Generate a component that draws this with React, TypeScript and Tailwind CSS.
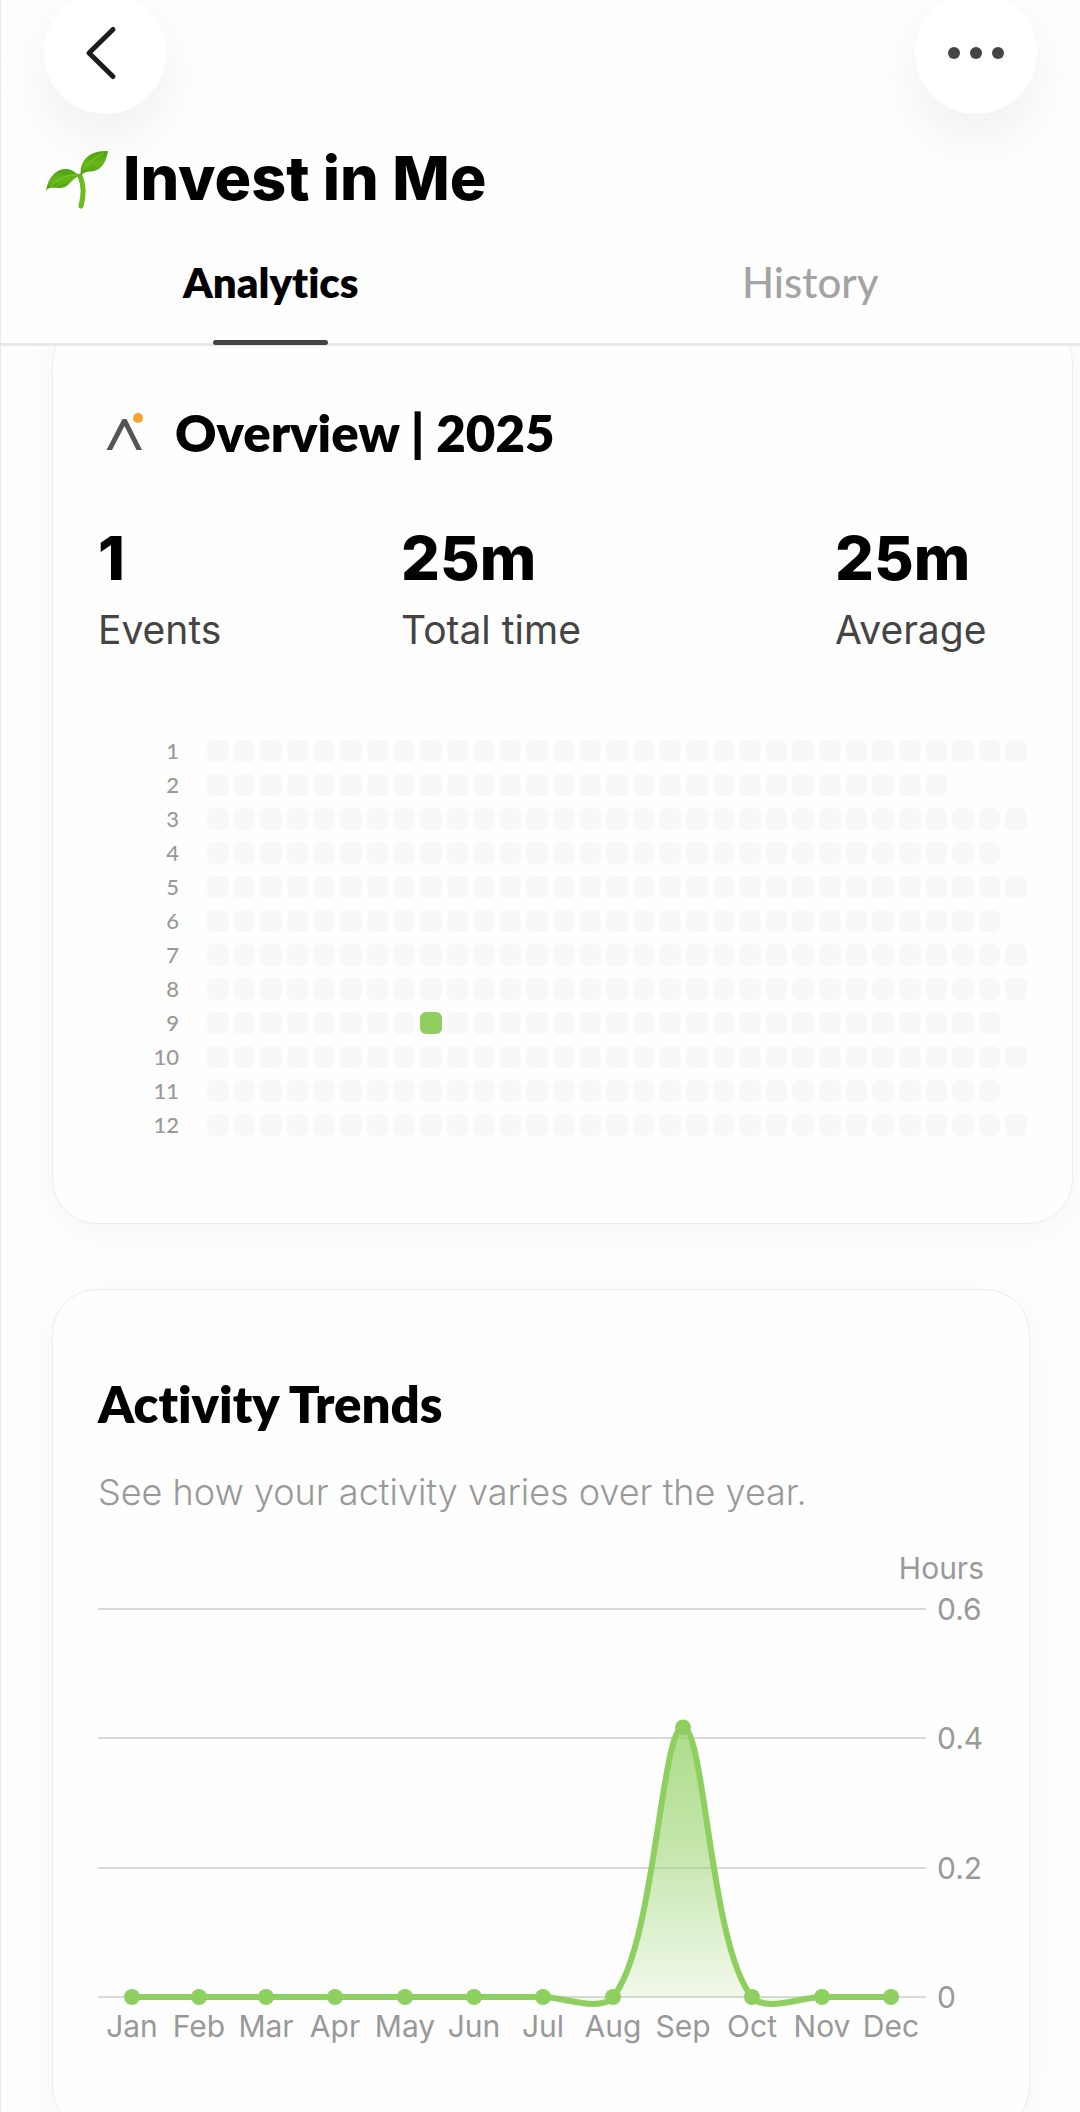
import { useState } from "react"

const daysInMonth = [31, 28, 31, 30, 31, 30, 31, 31, 30, 31, 30, 31];

const stats = [
    { value: "1", label: "Events" },
    { value: "25m", label: "Total time" },
    { value: "25m", label: "Average" },
];

// slope is the tangent of the curve in the point, before/after are the handle lengths along x
const months = [
    { name: "Jan", x: 34, hours: 0, slope: 0, before: 20, after: 20 },
    { name: "Feb", x: 101, hours: 0, slope: 0, before: 20, after: 20 },
    { name: "Mar", x: 168, hours: 0, slope: 0, before: 20, after: 20 },
    { name: "Apr", x: 237, hours: 0, slope: 0, before: 20, after: 20 },
    { name: "May", x: 307, hours: 0, slope: 0, before: 20, after: 20 },
    { name: "Jun", x: 376, hours: 0, slope: 0, before: 20, after: 20 },
    { name: "Jul", x: 445, hours: 0, slope: 0, before: 20, after: 20 },
    { name: "Aug", x: 515, hours: 0, slope: -1.2, before: 13, after: 42 },
    { name: "Sep", x: 585, hours: 0.4167, slope: 0, before: 22, after: 22 },
    { name: "Oct", x: 654, hours: 0, slope: 1.2, before: 42, after: 13 },
    { name: "Nov", x: 724, hours: 0, slope: 0, before: 20, after: 20 },
    { name: "Dec", x: 793, hours: 0, slope: 0, before: 20, after: 20 },
];

const BASE_Y = 457;
const PX_PER_HOUR = 647;

const points = months.map((m) => ({ ...m, y: BASE_Y - m.hours * PX_PER_HOUR }));

const getCurve = (pts: any[]) => {
    let d = `M${pts[0].x} ${pts[0].y}`;
    for (let i = 1; i < pts.length; i++) {
        const a = pts[i - 1];
        const b = pts[i];
        d += ` C${a.x + a.after} ${a.y + a.slope * a.after} ${b.x - b.before} ${b.y - b.slope * b.before} ${b.x} ${b.y}`;
    }
    return d;
}

const SproutIcon = () => (
    <svg width="64" height="64" viewBox="0 0 64 64" aria-hidden="true">
        <defs>
            <linearGradient id="leaf" x1="0" y1="0" x2="0" y2="1">
                <stop offset="0" stopColor="#4f9f12" />
                <stop offset="0.5" stopColor="#66b81a" />
                <stop offset="1" stopColor="#4c9d10" />
            </linearGradient>
        </defs>
        <path d="M35 30 C39 39 39 49 36 60" fill="none" stroke="#6cbb1c" strokeWidth="5" strokeLinecap="round" />
        <path d="M1 45 C3 30 12 23 21 23 C28 23 31 28 36 30 C29 30 27 37 20 41 C12 44 5 39 1 45Z" fill="url(#leaf)" />
        <path d="M36 30 C34 17 42 4 63 5 C61 16 57 23 49 25 C43 26 39 25 36 30Z" fill="url(#leaf)" />
        <path d="M6 40 C13 33 20 29 32 29 M39 23 C44 17 49 12 58 7" fill="none" stroke="#7cc92e" strokeWidth="1" strokeLinecap="round" />
    </svg>
)

const Heatmap = () => {
    return (
        <div className="mt-[86px] flex flex-col gap-3">
            {daysInMonth.map((days, month) => (
                <div key={month} className="flex items-center">
                    <span className="w-[81px] mr-7 text-right font-[Lato,sans-serif] text-[22px] leading-[22px] font-medium text-[#999999]">
                        {month + 1}
                    </span>
                    <div className="grid flex-1 grid-cols-31 gap-[5px]">
                        {Array.from({ length: days }, (_, day) => (
                            <div
                                key={day}
                                className={
                                    month === 8 && day === 8
                                        ? "h-[22px] rounded-md bg-[#8fcf60]"
                                        : "h-[22px] rounded-md bg-[#f8f8f8]"
                                }
                            />
                        ))}
                    </div>
                </div>
            ))}
        </div>
    )
}

const TrendsChart = () => {
    const curve = getCurve(points);

    return (
        <svg viewBox="0 0 886 510" className="mt-6 w-full h-auto font-[Inter,sans-serif] text-[30px]" role="img" aria-label="Hours per month">
            <defs>
                <linearGradient id="area" gradientUnits="userSpaceOnUse" x1="0" y1="187" x2="0" y2={BASE_Y}>
                    <stop offset="0" stopColor="#8fcf60" stopOpacity="0.72" />
                    <stop offset="0.4" stopColor="#8fcf60" stopOpacity="0.55" />
                    <stop offset="1" stopColor="#8fcf60" stopOpacity="0.12" />
                </linearGradient>
            </defs>
            <text x="886" y="39" textAnchor="end" fill="#999999">Hours</text>
            {["0.6", "0.4", "0.2", "0"].map((label) => {
                const y = Math.round(BASE_Y - Number(label) * PX_PER_HOUR);
                return (
                    <g key={label}>
                        <line x1="0" x2="828" y1={y} y2={y} stroke="#d9d9d9" strokeWidth="2" />
                        <text x="839" y={y + 11} fill="#999999">{label}</text>
                    </g>
                )
            })}
            <path d={curve + "Z"} fill="url(#area)" />
            <path d={curve} fill="none" stroke="#8fcf60" strokeWidth="6" />
            {points.map((p) => (
                <g key={p.name}>
                    <circle cx={p.x} cy={p.y} r="8" fill="#8fcf60" />
                    <text x={p.x} y="497" textAnchor="middle" fill="#999999">{p.name}</text>
                </g>
            ))}
        </svg>
    )
}

const App = () => {
    const [tab, setTab] = useState("Analytics");

    return (
        <div className="h-screen overflow-hidden border-l border-[#e8e8e8] bg-[#fefefe] font-[Inter,sans-serif] text-black [font-variant-ligatures:none]">
            <header className="relative z-10 -mt-2 border-b-3 border-[#e8e8e8] bg-[#fefefe]">
                <div className="flex justify-between px-[43px]">
                    <button aria-label="Back" className="flex size-[122px] items-center justify-center rounded-full bg-white pr-2 shadow-[0_24px_60px_rgba(0,0,0,0.06)]">
                        <svg width="32" height="56" viewBox="0 0 32 56" fill="none" stroke="#1c1c1c" strokeWidth="5" strokeLinecap="round" strokeLinejoin="round">
                            <path d="M28 4.500 L4 28 L28 51.500" />
                        </svg>
                    </button>
                    <button aria-label="More" className="flex size-[122px] items-center justify-center gap-[10px] rounded-full bg-white shadow-[0_24px_60px_rgba(0,0,0,0.06)]">
                        <span className="size-3 rounded-full bg-[#444444]" />
                        <span className="size-3 rounded-full bg-[#444444]" />
                        <span className="size-3 rounded-full bg-[#444444]" />
                    </button>
                </div>
                <h1 className="relative mt-7 flex items-center gap-[14px] px-11 text-[61px] leading-[72px] font-extrabold">
                    <SproutIcon />
                    Invest in Me
                </h1>
                <div role="tablist" className="flex">
                    {["Analytics", "History"].map((name) => (
                        <button
                            key={name}
                            role="tab"
                            aria-selected={tab === name}
                            onClick={() => setTab(name)}
                            className="flex flex-1 flex-col items-center pt-11"
                        >
                            <span className={tab === name
                                ? "font-[Lato,sans-serif] text-[42px] leading-[48px] font-extrabold"
                                : "font-[Lato,sans-serif] text-[42px] leading-[48px] font-medium text-[#a3a3a3]"}
                            >
                                {name}
                            </span>
                            <span className={tab === name
                                ? "-mb-[2px] mt-[34px] h-[5px] w-[115px] rounded-full bg-[#444444]"
                                : "mt-[34px] h-[3px]"}
                            />
                        </button>
                    ))}
                </div>
            </header>

            <main className="-mt-7 flex flex-col gap-[65px] pr-[50px] pl-[51px]">
                <section className="-mr-[43px] rounded-[45px] border border-[#ececec] bg-[#fefefe] px-[45px] pt-[84px] pb-[87px] shadow-[0_8px_40px_rgba(0,0,0,0.04)]">
                    <h2 className="flex items-center gap-8 pl-2 font-[Lato,sans-serif] text-[51px] leading-[60px] font-extrabold">
                        <svg width="37" height="42" viewBox="0 0 37 42" aria-hidden="true">
                            <path d="M0.500 38 L16.500 7 L20.500 7 L36 38 L30.500 38 L18.500 14 L6 38Z" fill="#555555" />
                            <circle cx="32" cy="6" r="5" fill="#f7a233" />
                        </svg>
                        Overview | 2025
                    </h2>
                    <dl className="mt-[59px] grid grid-cols-[303fr_434fr_192fr]">
                        {stats.map((stat) => (
                            <div key={stat.label} className="flex flex-col-reverse gap-3">
                                <dt className="text-[39px] leading-[48px] text-[#444444]">{stat.label}</dt>
                                <dd className="text-[61px] leading-[72px] font-extrabold">{stat.value}</dd>
                            </div>
                        ))}
                    </dl>
                    <Heatmap />
                </section>

                <section className="rounded-[45px] border border-[#ececec] bg-[#fefefe] px-[45px] pt-[84px] pb-20 shadow-[0_8px_40px_rgba(0,0,0,0.04)]">
                    <h2 className="font-[Lato,sans-serif] text-[51px] leading-[60px] font-extrabold">Activity Trends</h2>
                    <p className="mt-[34px] text-[36px] leading-[48px] font-light text-[#999999]">
                        See how your activity varies over the year.
                    </p>
                    <TrendsChart />
                </section>
            </main>
        </div>
    )
}

export default App
